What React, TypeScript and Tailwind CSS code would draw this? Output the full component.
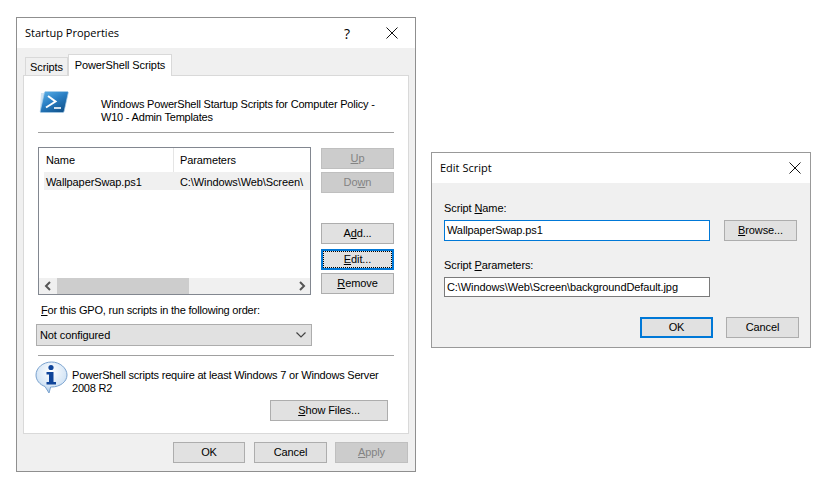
import React from 'react';

const uiFont = "font-['Liberation_Sans',Arial,sans-serif] tracking-[-0.1px]";
const titleFont = "font-['Open_Sans','Noto_Sans',sans-serif] tracking-normal";

const CloseIcon = () => (
  <svg width="12" height="12" viewBox="0 0 12 12" className="block">
    <path d="M.5.5l11 11M11.5.5l-11 11" stroke="#111" strokeWidth="1" fill="none" />
  </svg>
);

const Chevron = ({ dir }: { dir: 'left' | 'right' }) => (
  <svg width="8" height="10" viewBox="0 0 8 10" className="block">
    <path d={dir === 'left' ? 'M6 1L2 5l4 4' : 'M2 1l4 4-4 4'} stroke="#555" strokeWidth="2" fill="none" />
  </svg>
);

const PsIcon = () => (
  <svg width="32" height="26" viewBox="0 0 32 26" className="block">
    <defs>
      <linearGradient id="psFill" x1="0" y1="0" x2="0.7" y2="1">
        <stop offset="0" stopColor="#5fb4ea" />
        <stop offset="0.5" stopColor="#2a7fc4" />
        <stop offset="1" stopColor="#12558f" />
      </linearGradient>
    </defs>
    <path d="M3 4L2 20l3 4 2-20z" fill="#cfe3f3" />
    <path d="M7.5 2.5h21.5c1 0 1.5.6 1.2 1.6l-4 17.9c-.2 1-.9 1.5-1.8 1.5H3.5c-1 0-1.5-.6-1.2-1.6l4-17.9c.2-1 .6-1.5 1.2-1.5z" fill="url(#psFill)" stroke="#a9cde8" strokeWidth="0.7" />
    <path d="M10 7l7.5 5.500L8 18.500" stroke="#fff" strokeWidth="2" fill="none" />
    <path d="M16 19h7" stroke="#fff" strokeWidth="1.6" />
  </svg>
);

const InfoIcon = () => (
  <svg width="33" height="33" viewBox="0 0 33 33" className="block">
    <defs>
      <radialGradient id="infoFill" cx="0.5" cy="0.3" r="0.8">
        <stop offset="0" stopColor="#ffffff" />
        <stop offset="0.6" stopColor="#d6e6f6" />
        <stop offset="1" stopColor="#8fb6de" />
      </radialGradient>
    </defs>
    <path d="M16.500 1C8 1 1 6.800 1 14c0 5.500 3.800 9.600 9 11.500l4 6.500 1.600-6c.3 0 .6 0 .9 0C25 26 32 20.800 32 14S25 1 16.500 1z" fill="url(#infoFill)" stroke="#7ba3cf" strokeWidth="1" />
    <circle cx="16" cy="6.500" r="2.600" fill="#10459a" />
    <path d="M11.500 11h7v10h2.500v2.500H11.500V21H14v-7.500h-2.500z" fill="#10459a" />
  </svg>
);

const WinButton = ({
  children,
  className = '',
  disabled = false,
  focused = false,
  dotted = false,
}: {
  children: React.ReactNode;
  className?: string;
  disabled?: boolean;
  focused?: boolean;
  dotted?: boolean;
}) => (
  <button
    className={`relative flex h-[21px] shrink-0 items-center justify-center text-[11px] leading-none ${
      disabled
        ? 'border border-[#bfbfbf] bg-[#cccccc] text-[#838383]'
        : focused
          ? 'border-2 border-[#0078d7] bg-[#e1e1e1] text-black'
          : 'border border-[#adadad] bg-[#e1e1e1] text-black'
    } ${className}`}
  >
    {dotted && <span className="absolute inset-0 border border-dotted border-black" />}
    <span>{children}</span>
  </button>
);

const StartupDialog = () => (
  <div className={`flex h-[455px] w-[400px] shrink-0 flex-col border border-[#8f8f8f] bg-[#f0f0f0] ${uiFont}`}>
    <div className="flex h-[30px] shrink-0 items-center bg-white pl-2 pr-[17px]">
      <span className={`text-[11px] text-black ${titleFont}`}>Startup Properties</span>
      <span className={`ml-auto mr-[36px] text-[14px] text-black ${titleFont}`}>?</span>
      <CloseIcon />
    </div>

    <div className="flex items-end pl-2 pt-[6px]">
      <div className="flex h-[18px] w-[43px] items-center justify-center border border-b-0 border-[#d9d9d9] bg-[#f0f0f0] pt-[2px] text-[11px] text-black">
        Scripts
      </div>
      <div className="relative -mb-px flex h-[22px] w-[104px] items-center justify-center border border-b-0 border-[#d9d9d9] bg-white text-[11px] text-black">
        PowerShell Scripts
      </div>
    </div>

    <div className="mx-[6px] flex h-[359px] flex-col border border-[#d9d9d9] bg-white px-[14px] text-[11px] text-black">
      <div className="flex h-[56px] shrink-0 items-start">
        <div className="mt-[13px] w-[63px] shrink-0">
          <PsIcon />
        </div>
        <p className="mt-[22px] w-[285px] leading-[13px] tracking-[-0.2px]">
          Windows PowerShell Startup Scripts for Computer Policy - W10 - Admin Templates
        </p>
      </div>
      <div className="h-px shrink-0 bg-[#a0a0a0]" />

      <div className="mt-[14px] flex shrink-0 gap-[10px]">
        <div className="flex h-[148px] w-[273px] flex-col border border-[#828790] bg-white">
          <div className="flex h-[24px] shrink-0 items-center">
            <div className="flex h-full w-[135px] items-center border-r border-[#e5e5e5] pl-[7px]">Name</div>
            <div className="pl-[6px]">Parameters</div>
          </div>
          <div className="ml-[5px] flex h-[18px] shrink-0 items-center overflow-hidden whitespace-nowrap bg-[#f0f0f0] pt-[2px]">
            <div className="w-[130px] shrink-0 pl-[2px]">WallpaperSwap.ps1</div>
            <div className="pl-[6px]">C:\Windows\Web\Screen\</div>
          </div>
          <div className="mt-auto flex h-[16px] shrink-0 items-center bg-[#f0f0f0]">
            <div className="flex w-[18px] justify-center">
              <Chevron dir="left" />
            </div>
            <div className="h-full w-[132px] bg-[#cdcdcd]" />
            <div className="ml-auto flex w-[17px] justify-center">
              <Chevron dir="right" />
            </div>
          </div>
        </div>

        <div className="flex w-[73px] flex-col pt-px">
          <WinButton disabled><u>U</u>p</WinButton>
          <WinButton disabled className="mt-[3px]">Do<u>w</u>n</WinButton>
          <WinButton className="mt-[30px]">A<u>d</u>d...</WinButton>
          <WinButton focused dotted className="mt-[5px]"><u>E</u>dit...</WinButton>
          <WinButton className="mt-[3px]"><u>R</u>emove</WinButton>
        </div>
      </div>

      <p className="ml-[3px] mt-[8px] h-[14px] shrink-0 leading-[14px] tracking-[-0.2px]">
        <u>F</u>or this GPO, run scripts in the following order:
      </p>

      <div className="-ml-[2px] mt-[7px] flex h-[22px] w-[276px] shrink-0 items-center justify-between border border-[#adadad] bg-[#e1e1e1] pl-[3px] pr-[5px]">
        <span>Not configured</span>
        <svg width="10" height="6" viewBox="0 0 10 6" className="block">
          <path d="M.5.5L5 5 9.500.5" stroke="#444" strokeWidth="1.200" fill="none" />
        </svg>
      </div>

      <div className="mt-[9px] h-px shrink-0 bg-[#a0a0a0]" />

      <div className="-ml-[3px] mt-[5px] flex shrink-0 items-start">
        <InfoIcon />
        <p className="ml-[4px] mt-[8px] w-[320px] leading-[13px] tracking-[-0.2px]">
          PowerShell scripts require at least Windows 7 or Windows Server 2008 R2
        </p>
      </div>

      <WinButton className="ml-auto mr-[6px] mt-[5px] w-[118px]"><u>S</u>how Files...</WinButton>
    </div>

    <div className="mr-[7px] mt-[8px] flex justify-end gap-[8px]">
      <WinButton className="mr-px w-[72px]">OK</WinButton>
      <WinButton className="w-[73px]">Cancel</WinButton>
      <WinButton disabled className="w-[73px]"><u>A</u>pply</WinButton>
    </div>
  </div>
);

const EditDialog = () => (
  <div className={`mt-[135px] flex h-[196px] w-[380px] shrink-0 flex-col border border-[#999999] bg-[#f0f0f0] text-[11px] text-black ${uiFont}`}>
    <div className="flex h-[30px] shrink-0 items-center justify-between bg-white pl-2 pr-[9px]">
      <span className={`text-[11px] ${titleFont}`}>Edit Script</span>
      <CloseIcon />
    </div>
    <div className="flex flex-col px-[12px]">
      <p className="mt-[18px] h-[14px] leading-[14px]">
        Script <u>N</u>ame:
      </p>
      <div className="mt-[5px] flex gap-[14px]">
        <div className="flex h-[21px] w-[266px] items-center border border-[#0078d7] bg-white pl-[2px]">
          WallpaperSwap.ps1
        </div>
        <WinButton className="w-[73px]"><u>B</u>rowse...</WinButton>
      </div>
      <p className="mt-[17px] h-[14px] leading-[14px]">
        Script <u>P</u>arameters:
      </p>
      <div className="mt-[5px] flex h-[20px] w-[266px] items-center border border-[#7a7a7a] bg-white pl-[2px]">
        C:\Windows\Web\Screen\backgroundDefault.jpg
      </div>
      <div className="-mr-px mt-[20px] flex justify-end gap-[13px]">
        <WinButton focused className="w-[73px]">OK</WinButton>
        <WinButton className="w-[73px]">Cancel</WinButton>
      </div>
    </div>
  </div>
);

export default function App() {
  return (
    <div className="flex h-[492px] w-[826px] items-start gap-[15px] overflow-hidden bg-white pl-[16px] pt-[17px]">
      <StartupDialog />
      <EditDialog />
    </div>
  );
}
